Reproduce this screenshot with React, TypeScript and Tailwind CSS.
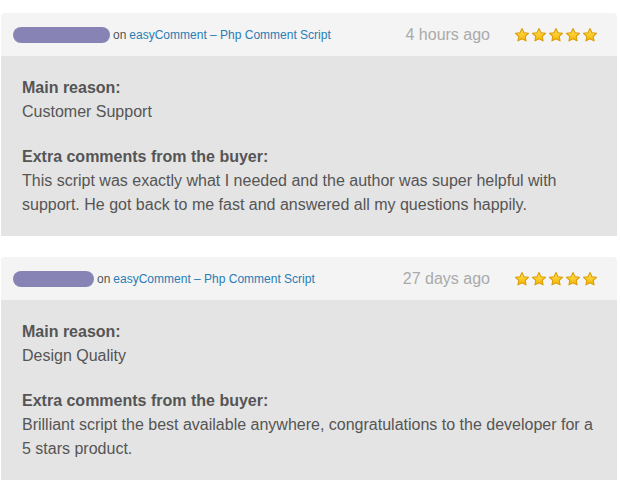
import React from "react";

type Review = {
  nameWidth: string;
  ago: string;
  reason: string;
  comment: string;
};

const reviews: Review[] = [
  {
    nameWidth: "w-[97px]",
    ago: "4 hours ago",
    reason: "Customer Support",
    comment:
      "This script was exactly what I needed and the author was super helpful with support. He got back to me fast and answered all my questions happily.",
  },
  {
    nameWidth: "w-[81px]",
    ago: "27 days ago",
    reason: "Design Quality",
    comment:
      "Brilliant script the best available anywhere, congratulations to the developer for a 5 stars product.",
  },
];

function Star() {
  return (
    <svg width="14" height="14" viewBox="1 1 22 22">
      <defs>
        <linearGradient id="starFill" x1="0" y1="0" x2="0" y2="1">
          <stop offset="0" stopColor="#ffe45c" />
          <stop offset="1" stopColor="#f7b500" />
        </linearGradient>
      </defs>
      <path
        d="M12 1.8l3.1 6.6 7.1.9-5.2 4.9 1.4 7.1L12 17.8l-6.4 3.5 1.4-7.1-5.2-4.9 7.1-.9z"
        fill="url(#starFill)"
        stroke="#d99a00"
        strokeWidth="1.6"
        strokeLinejoin="round"
      />
    </svg>
  );
}

function ReviewCard({ review }: { review: Review }) {
  return (
    <div className="w-[616px]">
      {/* header: buyer, item, time, rating */}
      <div className="flex h-[43px] items-center rounded-t-[4px] bg-[#f4f4f4] pl-[12px] pr-[20px]">
        <span className={`h-[16px] rounded-full bg-[#8784b5] ${review.nameWidth}`} />
        <span className="ml-[3px] text-[12px] text-[#555]">on </span>
        <span className="ml-[3px] text-[12px] text-[#2a7db5]">
          easyComment – Php Comment Script
        </span>
        <span className="ml-auto text-[16px] text-[#aaa]">{review.ago}</span>
        <div className="ml-[25px] flex gap-[3px]">
          {[0, 1, 2, 3, 4].map((i) => (
            <Star key={i} />
          ))}
        </div>
      </div>
      {/* body */}
      <div className="bg-[#e4e4e4] pb-[19px] pl-[21px] pr-[20px] pt-[20px] text-[16px] leading-[24px] text-[#555]">
        <p className="font-bold">Main reason:</p>
        <p>{review.reason}</p>
        <p className="mt-[21px] font-bold">Extra comments from the buyer:</p>
        <p>{review.comment}</p>
      </div>
    </div>
  );
}

export default function App() {
  return (
    <div
      className="flex min-h-[488px] flex-col gap-[21px] bg-white pl-[1px] pt-[13px]"
      style={{ fontFamily: '"Liberation Sans", Arial, sans-serif' }}
    >
      {reviews.map((r, i) => (
        <ReviewCard key={i} review={r} />
      ))}
    </div>
  );
}
